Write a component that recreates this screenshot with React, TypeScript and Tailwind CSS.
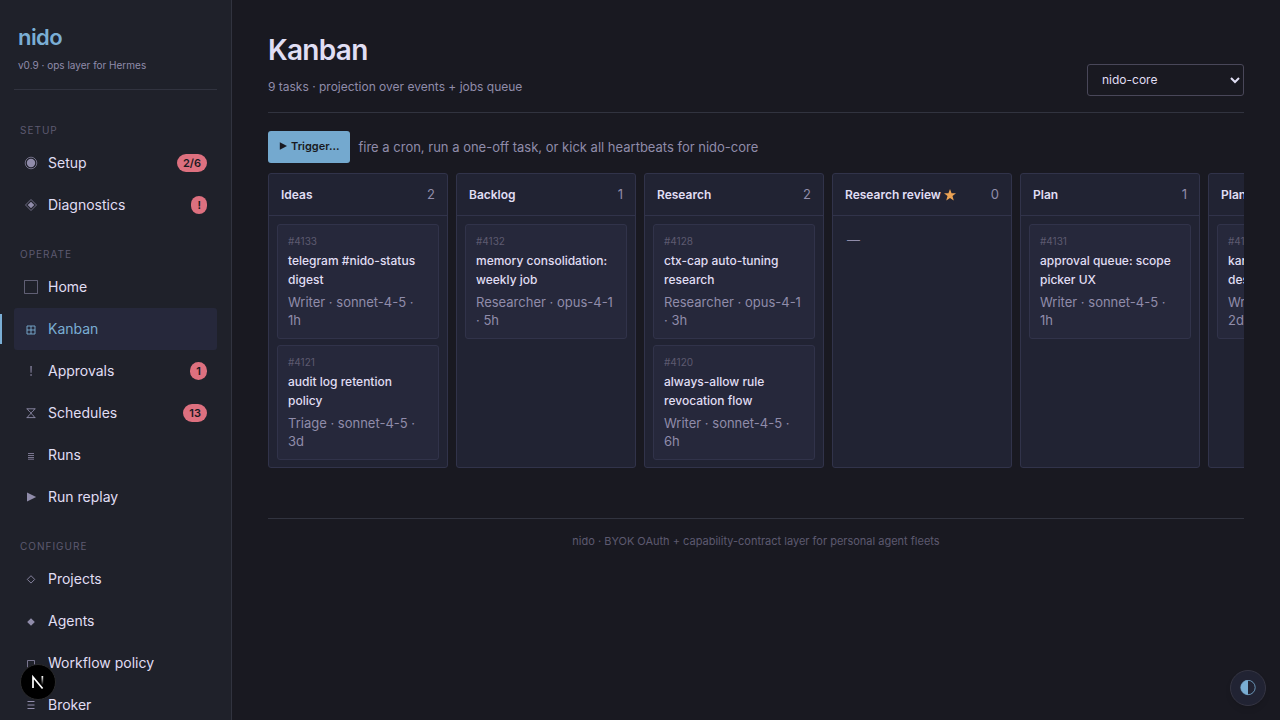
import type { ReactNode } from "react"

// 14x14 nav icons, drawn in the colour of the row
const ICONS: Record<string, ReactNode> = {
  setup: (
    <>
      <circle cx="7" cy="7" r="5.800" fill="none" stroke="currentColor" strokeWidth="0.700" />
      <circle cx="7" cy="7" r="4.200" fill="currentColor" />
    </>
  ),
  diagnostics: (
    <>
      <path d="M7 1.500L12.500 7 7 12.500 1.500 7z" fill="none" stroke="currentColor" strokeWidth="0.700" />
      <path d="M7 3.700L10.300 7 7 10.300 3.700 7z" fill="currentColor" />
    </>
  ),
  home: (
    <path d="M0.500 0.500h13v13H0.500z" fill="none" stroke="currentColor" strokeWidth="0.900" opacity="0.650" />
  ),
  kanban: (
    <path d="M3 4h8v8H3zM7 4v8M3 8h8" fill="none" stroke="currentColor" strokeWidth="0.900" />
  ),
  approvals: (
    <path d="M6.400 2h1.300l-.2 6.800h-.9zM6.400 10.300h1.300v1.500H6.400z" fill="currentColor" />
  ),
  schedules: (
    <path
      d="M2.500 2.800h9M2.500 11.600h9M3.500 2.800c0 2 3.500 3.200 3.500 4.400s-3.500 2.400-3.500 4.400M10.500 2.800c0 2-3.500 3.200-3.500 4.400s3.500 2.400 3.500 4.400"
      fill="none"
      stroke="currentColor"
      strokeWidth="0.900"
    />
  ),
  runs: (
    <path d="M4 5.500h6M4 7.500h6M4 9.500h6M4 11.200h6" fill="none" stroke="currentColor" strokeWidth="0.800" />
  ),
  replay: <path d="M3 2.500L12.200 7 3 11.500z" fill="currentColor" />,
  projects: (
    <path d="M7 3.700L10.700 7.400 7 11.100 3.300 7.400z" fill="none" stroke="currentColor" strokeWidth="0.900" />
  ),
  agents: <path d="M7 4.200L10.800 8 7 11.800 3.200 8z" fill="currentColor" />,
  policy: <path d="M3.500 4.500h7v7h-7z" fill="none" stroke="currentColor" strokeWidth="0.800" />,
  broker: <path d="M3.500 3.500h7M3.500 7h7M3.500 10.500h7" fill="none" stroke="currentColor" />,
}

type NavItem = { icon: string; label: string; badge?: string; active?: boolean }
type Task = { id: number; title: string; meta: string }
type Column = { name: string; starred?: boolean; tasks: Task[] }

const NAV: { title: string; items: NavItem[] }[] = [
  {
    title: "Setup",
    items: [
      { icon: "setup", label: "Setup", badge: "2/6" },
      { icon: "diagnostics", label: "Diagnostics", badge: "!" },
    ],
  },
  {
    title: "Operate",
    items: [
      { icon: "home", label: "Home" },
      { icon: "kanban", label: "Kanban", active: true },
      { icon: "approvals", label: "Approvals", badge: "1" },
      { icon: "schedules", label: "Schedules", badge: "13" },
      { icon: "runs", label: "Runs" },
      { icon: "replay", label: "Run replay" },
    ],
  },
  {
    title: "Configure",
    items: [
      { icon: "projects", label: "Projects" },
      { icon: "agents", label: "Agents" },
      { icon: "policy", label: "Workflow policy" },
      { icon: "broker", label: "Broker" },
    ],
  },
]

const COLUMNS: Column[] = [
  {
    name: "Ideas",
    tasks: [
      { id: 4133, title: "telegram #nido-status digest", meta: "Writer · sonnet-4-5 · 1h" },
      { id: 4121, title: "audit log retention policy", meta: "Triage · sonnet-4-5 · 3d" },
    ],
  },
  {
    name: "Backlog",
    tasks: [{ id: 4132, title: "memory consolidation: weekly job", meta: "Researcher · opus-4-1 · 5h" }],
  },
  {
    name: "Research",
    tasks: [
      { id: 4128, title: "ctx-cap auto-tuning research", meta: "Researcher · opus-4-1 · 3h" },
      { id: 4120, title: "always-allow rule revocation flow", meta: "Writer · sonnet-4-5 · 6h" },
    ],
  },
  { name: "Research review", starred: true, tasks: [] },
  {
    name: "Plan",
    tasks: [{ id: 4131, title: "approval queue: scope picker UX", meta: "Writer · sonnet-4-5 · 1h" }],
  },
  {
    name: "Plan review",
    starred: true,
    tasks: [{ id: 4119, title: "kanban drag-drop design", meta: "Writer · sonnet-4-5 · 2d" }],
  },
]

function NavLink({ item }: { item: NavItem }) {
  return (
    <a
      href="#"
      aria-current={item.active ? "page" : undefined}
      className={`relative flex h-[42px] items-center gap-2.5 rounded-[3px] px-2.5 text-sm ${
        item.active ? "bg-[#26283b] text-[#7aaed4]" : "text-[#e0def4]"
      }`}
    >
      {item.active && <span className="absolute top-1.5 bottom-1.5 -left-3.5 w-0.5 bg-[#7aaed4]" />}
      <svg
        viewBox="0 0 14 14"
        aria-hidden="true"
        className={`size-3.5 shrink-0 ${item.active ? "text-[#7aaed4]" : "text-[#908caa]"}`}
      >
        {ICONS[item.icon]}
      </svg>
      <span className="flex-1">{item.label}</span>
      {item.badge && (
        <span className="rounded-full bg-[#dd707f] px-1.5 text-[11px] leading-[18px] font-semibold text-[#191921]">
          {item.badge}
        </span>
      )}
    </a>
  )
}

function Sidebar() {
  return (
    <aside className="h-screen w-[232px] shrink-0 overflow-hidden border-r border-[#31333f] bg-[#1f212a] px-3.5">
      <div className="border-b border-[#31333f] px-1 pt-[22px] pb-4">
        <div className="text-[22px] leading-[30px] font-semibold tracking-tight text-[#7aaed4]">nido</div>
        <div className="mt-[5px] text-[10px] leading-4 text-[#908caa]">v0.9 · ops layer for Hermes</div>
      </div>
      <nav className="pt-3">
        {NAV.map((group) => (
          <div key={group.title} className="pt-5">
            <h2 className="mb-1 px-1.5 text-[10px] leading-4 tracking-widest text-[#5d5a70] uppercase">
              {group.title}
            </h2>
            {group.items.map((item) => (
              <NavLink key={item.label} item={item} />
            ))}
          </div>
        ))}
      </nav>
    </aside>
  )
}

function TaskCard({ task }: { task: Task }) {
  return (
    <article className="rounded-[3px] border border-[#31334a] bg-[#26283b] px-2.5 pt-2.5 pb-[9px]">
      <div className="text-[10px] leading-[13px] text-[#5d5a70]">#{task.id}</div>
      <h3 className="mt-[3px] text-xs leading-[19px] font-medium text-[#e0def4]">{task.title}</h3>
      <p className="mt-1 text-[13px] leading-[18px] text-[#908caa]">{task.meta}</p>
    </article>
  )
}

function BoardColumn({ column }: { column: Column }) {
  return (
    <section className="w-[180px] shrink-0 rounded-[3px] border border-[#31334a] bg-[#212333]">
      <header className="flex h-[42px] items-center justify-between border-b border-[#31334a] px-3">
        <h2 className="flex items-center gap-[3px] text-xs font-semibold text-[#e0def4]">
          {column.name}
          {column.starred && (
            <svg viewBox="0 0 24 24" aria-hidden="true" className="size-3 fill-[#eda354]">
              <path d="M12 0l3.1 8.4 8.9.3-7 5.5 2.5 8.6L12 17.8l-7.5 5 2.5-8.6-7-5.5 8.900-.3z" />
            </svg>
          )}
        </h2>
        <span className="text-[13px] text-[#908caa]">{column.tasks.length}</span>
      </header>
      <div className="flex flex-col gap-1.5 px-2 pt-2 pb-[7px]">
        {column.tasks.map((task) => (
          <TaskCard key={task.id} task={task} />
        ))}
        {column.tasks.length === 0 && (
          <p className="px-1.5 py-1.5 text-[13px] leading-5 text-[#908caa]">—</p>
        )}
      </div>
    </section>
  )
}

export default function App() {
  return (
    <div className="flex h-screen overflow-hidden bg-[#191921] font-['Inter','DejaVu_Sans',sans-serif]">
      <Sidebar />
      <main className="min-w-0 flex-1 px-9 pt-8">
        <header className="flex items-end justify-between border-b border-[#31333f] pb-4">
          <div>
            <h1 className="text-[28px] leading-9 font-semibold tracking-tight text-[#e0def4]">Kanban</h1>
            <p className="mt-2.5 text-xs leading-[18px] text-[#908caa]">
              9 tasks · projection over events + jobs queue
            </p>
          </div>
          <select
            aria-label="Project"
            className="h-8 w-[157px] rounded-[3px] border border-[#494759] bg-[#191921] px-2.5 pb-px text-xs text-[#e0def4]"
          >
            <option>nido-core</option>
          </select>
        </header>

        <div className="mt-[18px] flex items-center gap-2">
          <button
            type="button"
            className="flex h-8 items-center gap-1 rounded-[3px] bg-[#74a9cf] px-[11px] pb-0.5 text-[11px] font-semibold text-[#191921]"
          >
            <svg viewBox="0 0 8 8" aria-hidden="true" className="size-2 fill-current">
              <path d="M0.800 0.300L8 4 0.800 7.700z" />
            </svg>
            Trigger…
          </button>
          <span className="pt-px text-[13px] text-[#908caa]">
            fire a cron, run a one-off task, or kick all heartbeats for nido-core
          </span>
        </div>

        <div className="mt-2.5 flex gap-2 overflow-x-auto [scrollbar-width:none]">
          {COLUMNS.map((column) => (
            <BoardColumn key={column.name} column={column} />
          ))}
        </div>

        <footer className="mt-[50px] border-t border-[#31333f] pt-[13px] text-center text-[11px] leading-[18px] text-[#5d5a70]">
          nido · BYOK OAuth + capability-contract layer for personal agent fleets
        </footer>
      </main>

      <button
        type="button"
        aria-label="Open developer tools"
        className="fixed bottom-5 left-5 flex size-9 items-center justify-center rounded-full border border-[#2a2a2c] bg-black"
      >
        <svg viewBox="0 0 16 16" className="size-4" fill="none" strokeWidth="1.700">
          <defs>
            <linearGradient id="stem" x1="0" y1="2" x2="0" y2="11" gradientUnits="userSpaceOnUse">
              <stop stopColor="#fff" />
              <stop offset="1" stopColor="#fff" stopOpacity="0" />
            </linearGradient>
          </defs>
          <path d="M3 14V3L12.600 14.500" stroke="#fff" />
          <path d="M11.500 2h1.700v10h-1.700z" fill="url(#stem)" />
        </svg>
      </button>
      <button
        type="button"
        aria-label="Toggle theme"
        className="fixed right-3.5 bottom-3.5 flex size-9 items-center justify-center rounded-full border border-[#353543] bg-[#212333] shadow-md"
      >
        <svg viewBox="0 0 16 16" className="size-4">
          <circle cx="8" cy="7.500" r="7.200" fill="none" stroke="#7aaed4" strokeWidth="0.800" />
          <path d="M8 0.300a7.200 7.200 0 0 0 0 14.400z" fill="#7aaed4" />
        </svg>
      </button>
    </div>
  )
}
